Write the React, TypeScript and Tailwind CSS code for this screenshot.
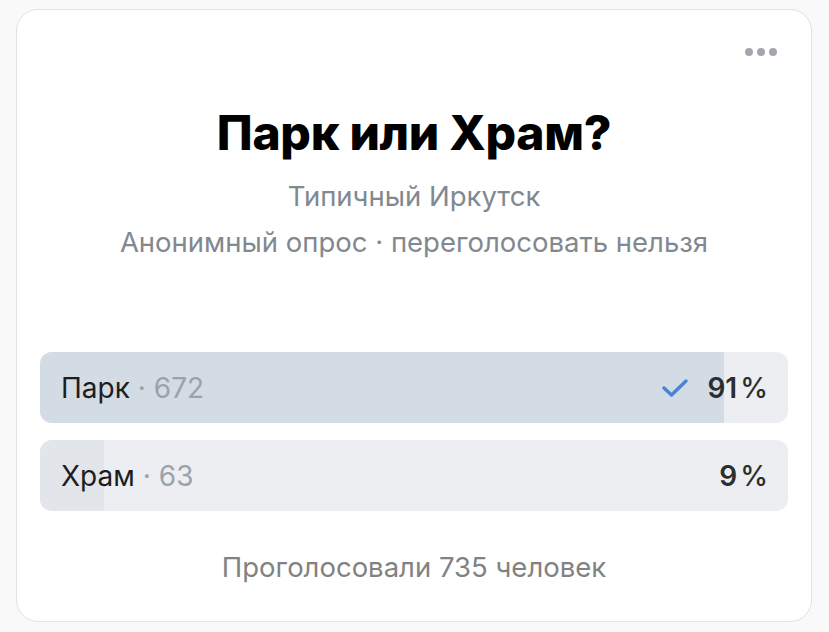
import React from "react";

const total = 735;
const options = [
  { label: "Парк", count: 672, pct: 91, checked: true, fill: "bg-[#d3dbe4]" },
  { label: "Храм", count: 63, pct: 9, checked: false, fill: "bg-[#e2e5ea]" },
];

export default function App() {
  return (
    <div className="min-h-[632px] w-[829px] bg-[#f9f9f9] pl-[16px] pt-[9px]" style={{ fontFamily: "Inter, 'Noto Sans', sans-serif" }}>
      <div className="flex h-[613px] w-[796px] flex-col rounded-[22px] border border-[#e2e2e2] bg-white px-[23px] pt-[38px]">
        <div className="flex h-[8px] justify-end gap-[4px] pr-[11px]">
          <span className="h-[8px] w-[8px] rounded-full bg-[#a3a7ad]" />
          <span className="h-[8px] w-[8px] rounded-full bg-[#a3a7ad]" />
          <span className="h-[8px] w-[8px] rounded-full bg-[#a3a7ad]" />
        </div>
        <h1 className="mt-[50px] text-center text-[48px] font-extrabold leading-[54px] tracking-[-0.3px] text-black">
          Парк или Храм?
        </h1>
        <div className="mt-[13px] text-center text-[27.5px] leading-[46px] text-[#818890]">
          <div>Типичный Иркутск</div>
          <div>Анонимный опрос · переголосовать нельзя</div>
        </div>
        <div className="mt-[87px] flex flex-col gap-[17px]">
          {options.map((o) => (
            <div key={o.label} className="relative h-[71px] overflow-hidden rounded-[12px] bg-[#eceef1]">
              <div className={`absolute inset-y-0 left-0 ${o.fill}`} style={{ width: `${(o.count / total) * 100}%` }} />
              <div className="relative flex h-full items-center justify-between pl-[21px] pr-[20px] text-[28px]">
                <div className="flex items-center">
                  <span className="text-[#1d1d1f]">{o.label}</span>
                  <span className="ml-[8px] text-[#9aa2ab]">· {o.count}</span>
                </div>
                <div className="flex items-center">
                  {o.checked && (
                    <svg width="28" height="20" viewBox="0 0 28 20" className="mr-[18px]">
                      <path d="M3 10 L10.5 17 L25 3" fill="none" stroke="#4a86d0" strokeWidth="3.5" strokeLinecap="round" strokeLinejoin="round" />
                    </svg>
                  )}
                  <span className="font-semibold text-[#2c2d2e]">{o.pct}</span>
                  <span className="ml-[3px] font-medium text-[#2c2d2e]">%</span>
                </div>
              </div>
            </div>
          ))}
        </div>
        <div className="mt-[40px] text-center text-[27.5px] leading-[32px] text-[#828282]">
          Проголосовали 735 человек
        </div>
      </div>
    </div>
  );
}
